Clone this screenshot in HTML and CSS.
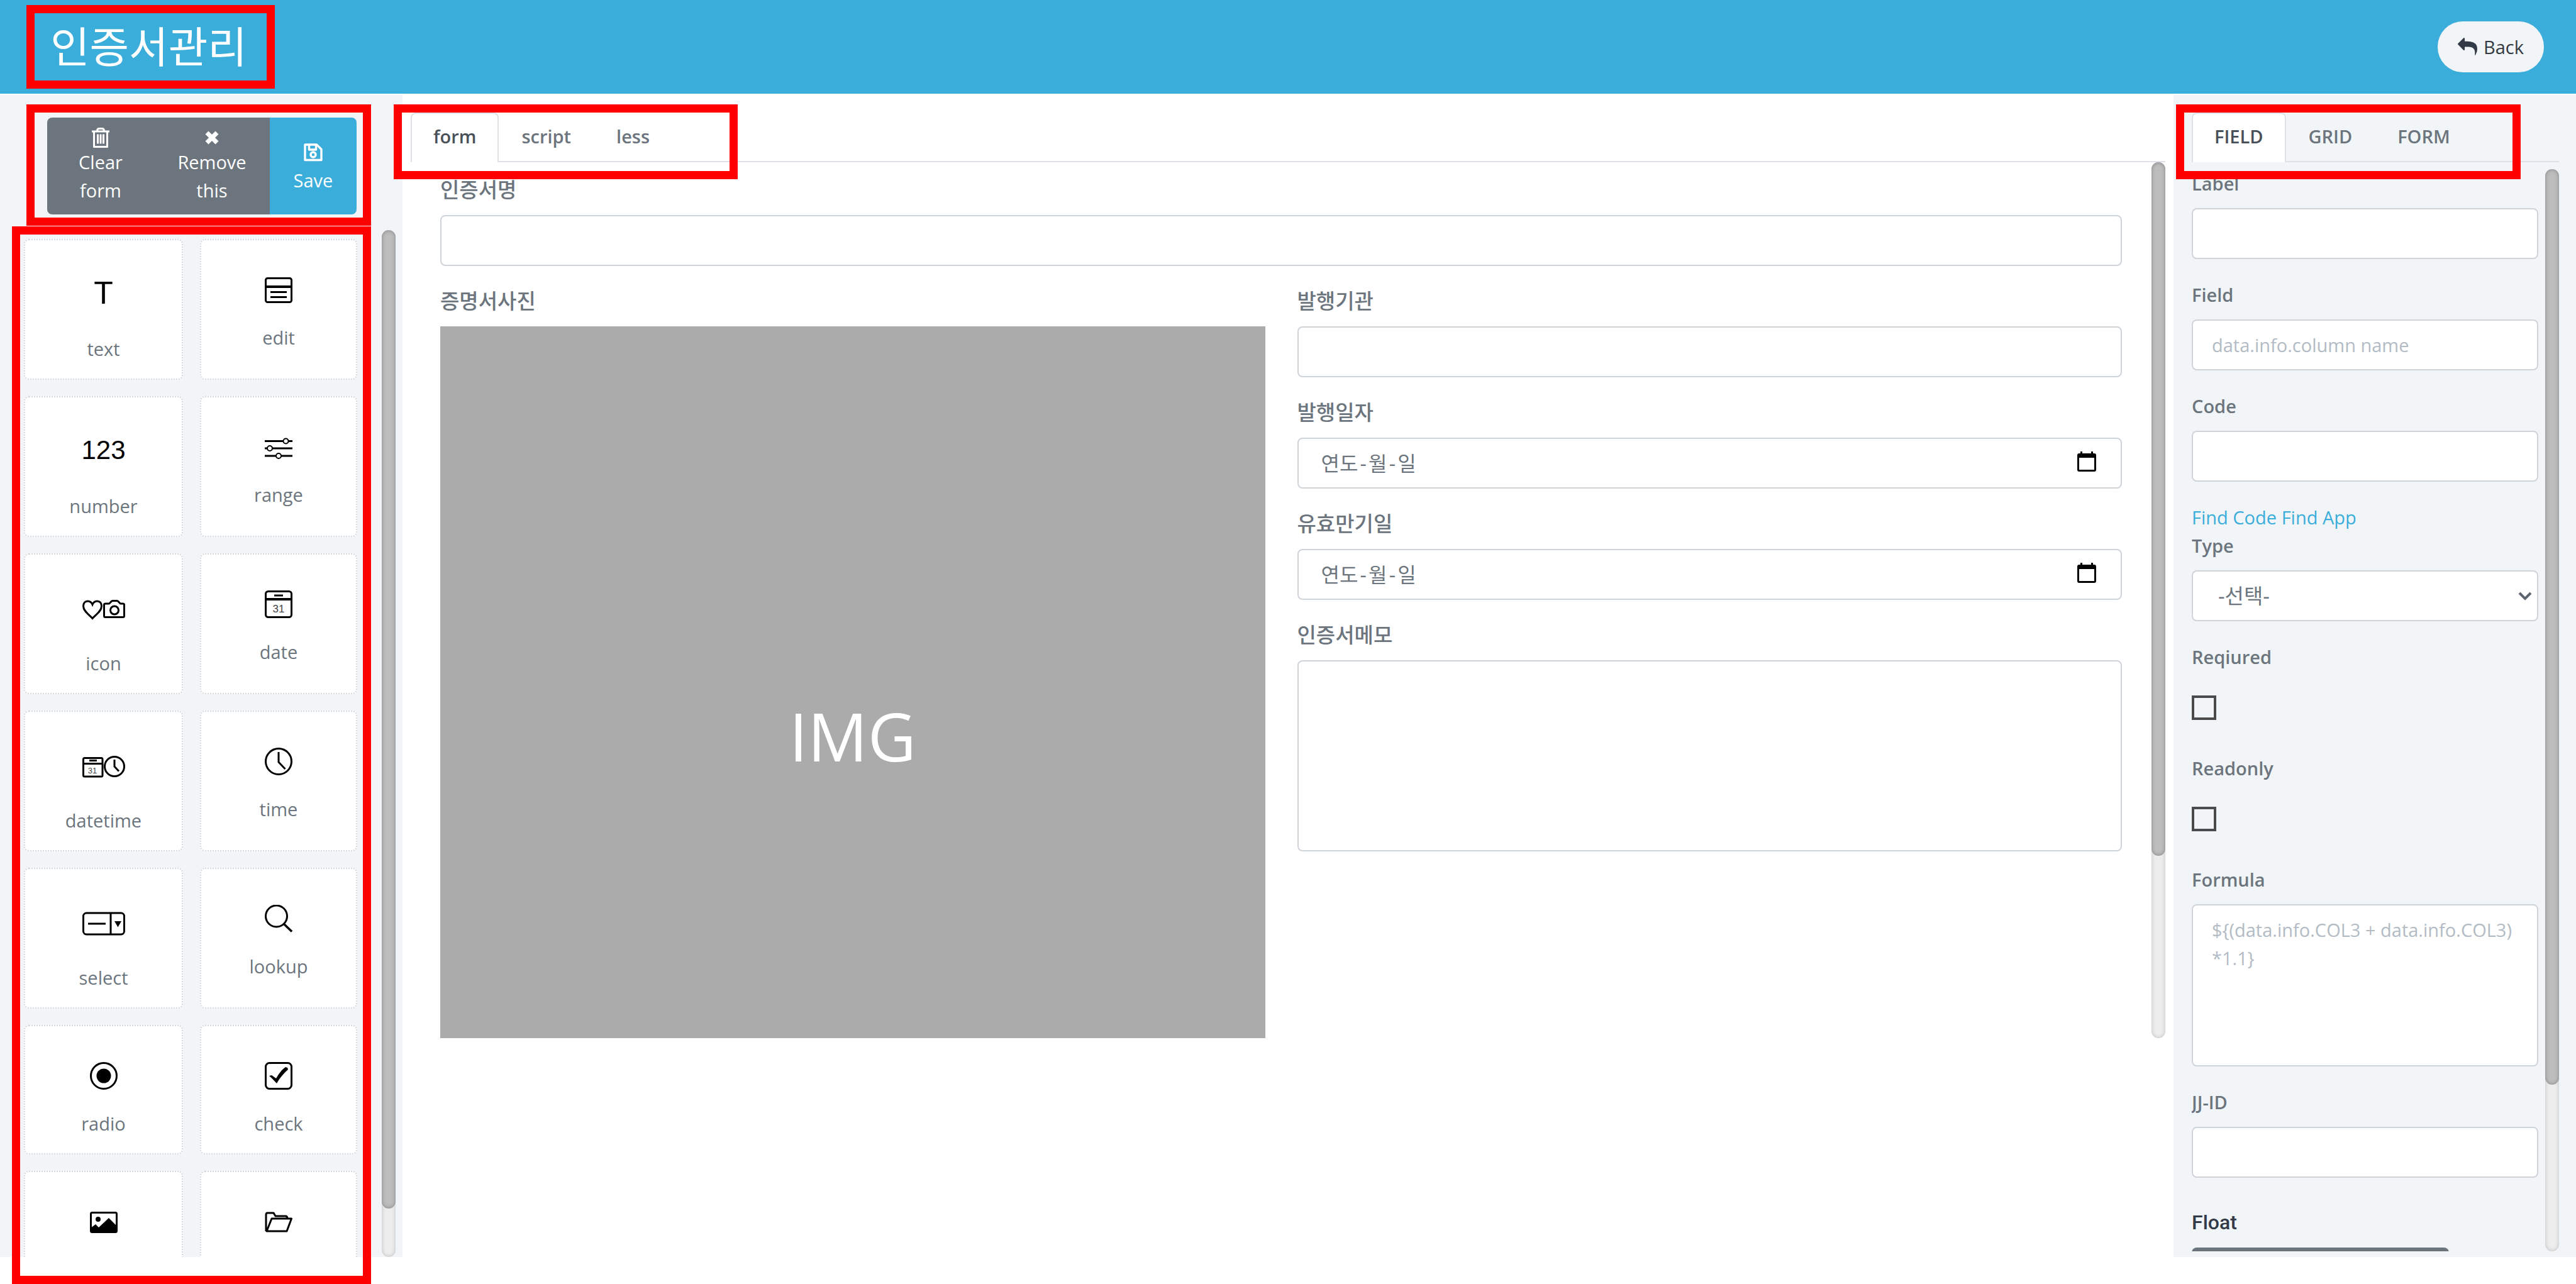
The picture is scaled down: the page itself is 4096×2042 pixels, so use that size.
FILE: index.html
```html
<!DOCTYPE html>
<html lang="ko">
<head>
<meta charset="utf-8">
<title>인증서관리</title>
<link rel="stylesheet" href="styles.css">
</head>
<body>
<div class="page">
  <header class="topbar">
    <h1 class="title">인증서관리</h1>
    <button class="back" type="button">
      <svg class="back-icon" viewBox="0 0 1792 1792" aria-hidden="true"><path d="M1792 1120q0 166-127 451-3 7-10.500 24t-13.500 30-13 22q-12 17-28 17-15 0-23.500-10t-8.500-25q0-9 2.500-26.500t2.500-23.500q5-68 5-123 0-101-17.500-181t-48.500-138.500-80-101-105.500-69.500-133-42.500-154-21.500-175.500-6h-224v256q0 26-19 45t-45 19-45-19l-512-512q-19-19-19-45t19-45l512-512q19-19 45-19t45 19 19 45v256h224q713 0 875 403 53 134 53 333z"/></svg>
      Back
    </button>
  </header>

  <div class="columns">
    <aside class="palette">
      <div class="tools">
        <button class="tool" type="button">
          <svg class="tool-icon" viewBox="0 0 34 32" aria-hidden="true"><path d="M3 6h28M11.500 5.500q0-4 3-4h5q3 0 3 4M6.500 7v23.500h21V7M12.500 10.500v15M17 10.500v15M21.500 10.500v15" fill="none" stroke="currentColor" stroke-width="3" stroke-linejoin="round"/></svg>
          <span>Clear<br>form</span>
        </button>
        <button class="tool" type="button">
          <svg class="tool-icon" viewBox="0 0 34 32" aria-hidden="true"><path d="M9 8l16 16M25 8L9 24" fill="none" stroke="currentColor" stroke-width="7"/></svg>
          <span>Remove<br>this</span>
        </button>
        <button class="tool tool-save" type="button">
          <svg class="tool-icon" viewBox="0 0 34 32" aria-hidden="true"><path d="M4 4h18.500l7.500 7.500V28.500H4zM10.500 4v8h11V5" fill="none" stroke="currentColor" stroke-width="3.400" stroke-linejoin="round"/><circle cx="17" cy="20" r="4" fill="none" stroke="currentColor" stroke-width="3.400"/></svg>
          <span>Save</span>
        </button>
      </div>

      <div class="palette-scroll">
        <div class="cards">
          <div class="card"><span class="glyph glyph-t">T</span><span>text</span></div>
          <div class="card">
            <svg class="icon" viewBox="0 0 44 44"><g class="line"><rect x="1.500" y="3.500" width="41" height="38" rx="3"/><path d="M1 17h42" stroke-width="4"/><path d="M9 25.500h26M9 33.500h26"/></g></svg>
            <span>edit</span></div>

          <div class="card"><span class="glyph">123</span><span>number</span></div>
          <div class="card">
            <svg class="icon" viewBox="0 0 44 44"><g class="line"><path d="M0 12.500h44M0 24h44M0 36h44"/><g fill="#fff" stroke-width="2"><circle cx="33.500" cy="12.500" r="4"/><circle cx="8" cy="24" r="4"/><circle cx="22" cy="36" r="4"/></g></g></svg>
            <span>range</span></div>

          <div class="card">
            <svg class="icon-wide" viewBox="0 0 68 62"><g class="line"><path d="M16 44.500C11 39 1.500 33 1.500 25c0-5 3-8 7-8 3.500 0 6 2 7.500 5.500C17.500 19 20 17 23.500 17c4 0 7 3 7 8 0 8-9.500 14-14.500 19.500z"/><path d="M36.500 21h5.500c2.500 0 3-4.500 6-4.500h7c3 0 3.500 4.500 6 4.500h3.500c1.500 0 2 .5 2 2v17.500c0 1.500-.5 2-2 2h-28c-1.500 0-2-.5-2-2V23c0-1.500.5-2 2-2z"/><circle cx="51" cy="31.500" r="6.500"/></g></svg>
            <span>icon</span></div>
          <div class="card">
            <svg class="icon" viewBox="0 0 44 44"><g class="line"><rect x="1.500" y="1.500" width="41" height="41" rx="4"/><path d="M1 14h42" stroke-width="4"/><path d="M15 8h14"/></g><text class="day" x="22" y="35">31</text></svg>
            <span>date</span></div>

          <div class="card">
            <svg class="icon-wide" viewBox="0 0 68 62"><g class="line"><rect x="1.500" y="16.500" width="30.500" height="29.500" rx="2"/><path d="M1 25.500h31M11 20.500h12"/><circle cx="51" cy="30" r="15.500"/><path d="M51 19v11l7 7.500"/></g><text class="day day-small" x="16" y="41">31</text></svg>
            <span>datetime</span></div>
          <div class="card">
            <svg class="icon" viewBox="0 0 44 44"><g class="line"><circle cx="22" cy="22" r="20.500"/><path d="M22 7v16l10.500 11"/></g></svg>
            <span>time</span></div>

          <div class="card">
            <svg class="icon-wide" viewBox="0 0 68 62"><g class="line"><rect x="1.500" y="13" width="65" height="34" rx="5"/><path d="M45 13v34M9 30h28"/></g><path d="M51 26h11l-5.500 9.500z"/></svg>
            <span>select</span></div>
          <div class="card">
            <svg class="icon" viewBox="0 0 44 44"><g class="line"><circle cx="18.500" cy="18" r="17"/><path d="M30 30l13 12.500" stroke-width="3.500"/></g></svg>
            <span>lookup</span></div>

          <div class="card">
            <svg class="icon" viewBox="0 0 44 44"><circle class="line" cx="22" cy="22" r="20.500"/><circle cx="22" cy="22" r="11.500"/></svg>
            <span>radio</span></div>
          <div class="card">
            <svg class="icon" viewBox="0 0 44 44"><rect class="line" x="1.500" y="1.500" width="41" height="41" rx="6"/><path d="M7 22l4-1 7 5c4-7 9-14 15-18l3 1 1 3c-7 6-13 13-18 22-4-4-7-8-12-12z"/></svg>
            <span>check</span></div>

          <div class="card card-bare">
            <svg class="icon" viewBox="0 0 44 44"><rect class="line" x="1.500" y="7.500" width="41" height="31" rx="2"/><circle cx="13" cy="18" r="4"/><path d="M1 32l8-6 5 5L30 16l13 13v10H1z"/></svg>
          </div>
          <div class="card card-bare">
            <svg class="icon" viewBox="0 0 44 44"><path class="line" d="M2 37V11c0-2 1-3 2-3h10l3 5h16c2 0 3 1 3 4M3 37l8-20h31.500L35 37z" stroke-linejoin="round"/></svg>
          </div>
        </div>
        <div class="rail"><div class="thumb" style="height: 95.300%"></div></div>
      </div>
    </aside>

    <main class="canvas">
      <nav class="tabs">
        <a class="tab active" href="#form">form</a>
        <a class="tab" href="#script">script</a>
        <a class="tab" href="#less">less</a>
      </nav>
      <div class="canvas-scroll">
        <form class="form">
          <div class="field wide">
            <label for="name">인증서명</label>
            <input id="name" type="text">
          </div>
          <div class="field photo">
            <label for="photo">증명서사진</label>
            <div class="img" id="photo">IMG</div>
          </div>
          <div class="stack">
            <div class="field">
              <label for="org">발행기관</label>
              <input id="org" type="text">
            </div>
            <div class="field">
              <label for="issued">발행일자</label>
              <div class="datebox">
                <input id="issued" type="text" placeholder="연도&#8202;-&#8202;월&#8202;-&#8202;일">
                <svg class="cal" viewBox="0 0 30 32" aria-hidden="true"><path d="M5 0h3v3h14V0h3v3h2q3 0 3 3v23q0 3-3 3H3q-3 0-3-3V6q0-3 3-3h2zM3 10v19h24V10z"/></svg>
              </div>
            </div>
            <div class="field">
              <label for="expires">유효만기일</label>
              <div class="datebox">
                <input id="expires" type="text" placeholder="연도&#8202;-&#8202;월&#8202;-&#8202;일">
                <svg class="cal" viewBox="0 0 30 32" aria-hidden="true"><path d="M5 0h3v3h14V0h3v3h2q3 0 3 3v23q0 3-3 3H3q-3 0-3-3V6q0-3 3-3h2zM3 10v19h24V10z"/></svg>
              </div>
            </div>
            <div class="field">
              <label for="memo">인증서메모</label>
              <textarea class="memo" id="memo"></textarea>
            </div>
          </div>
        </form>
        <div class="rail"><div class="thumb" style="height: 79.200%"></div></div>
      </div>
    </main>

    <aside class="props" lang="en">
      <nav class="tabs">
        <a class="tab active" href="#field">FIELD</a>
        <a class="tab" href="#grid">GRID</a>
        <a class="tab" href="#formtab">FORM</a>
      </nav>
      <div class="props-scroll">
        <form class="props-form">
          <div class="field"><label for="p-label">Label</label><input id="p-label" type="text"></div>
          <div class="field"><label for="p-field">Field</label><input id="p-field" type="text" placeholder="data.info.column name"></div>
          <div class="field"><label for="p-code">Code</label><input id="p-code" type="text"></div>
          <div class="links"><a href="#code">Find Code</a> <a href="#app">Find App</a></div>
          <div class="field">
            <label for="p-type">Type</label>
            <div class="selectbox">
              <select id="p-type" lang="ko"><option>-선택-</option></select>
              <svg class="chevron" viewBox="0 0 22 14" aria-hidden="true"><path d="M2 2l9 9 9-9" fill="none" stroke="#5c6670" stroke-width="4"/></svg>
            </div>
          </div>
          <div class="field"><label for="p-req">Reqiured</label><div class="tick"><input id="p-req" type="checkbox"></div></div>
          <div class="field"><label for="p-ro">Readonly</label><div class="tick"><input id="p-ro" type="checkbox"></div></div>
          <div class="field"><label for="p-formula">Formula</label><textarea class="formula" id="p-formula" placeholder="${(data.info.COL3 + data.info.COL3) *1.1}"></textarea></div>
          <div class="field"><label for="p-id">JJ-ID</label><input id="p-id" type="text"></div>
          <h2 class="float">Float</h2>
          <button class="float-btn" type="button" aria-label="Float"></button>
        </form>
        <div class="rail"><div class="thumb" style="height: 84.600%"></div></div>
      </div>
    </aside>
  </div>

  <div class="mark mark-title"></div>
  <div class="mark mark-tools"></div>
  <div class="mark mark-cards"></div>
  <div class="mark mark-tabs"></div>
  <div class="mark mark-props"></div>
</div>
</body>
</html>
```

FILE: styles.css
```css
* { box-sizing: border-box; }

body {
  margin: 0;
  background: #fff;
  color: #6c757d;
  font: 400 29px/45px "Open Sans", "Noto Sans CJK KR", sans-serif;
}

button, input, select, textarea { font: inherit; color: inherit; }

.page {
  position: relative;
  height: 100vh;
  overflow: hidden;
  display: flex;
  flex-direction: column;
  padding-bottom: 43px;
}

/* Header */
.topbar {
  flex: none;
  height: 149px;
  padding: 0 51px 0 80px;
  display: flex;
  align-items: center;
  justify-content: space-between;
  background: #3badda;
}

.title {
  margin: 0;
  padding-bottom: 8px;
  color: #fff;
  font: 400 68px/100px "Noto Sans CJK KR", sans-serif;
}

.back {
  display: flex;
  align-items: center;
  gap: 10px;
  height: 81px;
  padding: 0 32px;
  border: 0;
  border-radius: 40px;
  background: #f1f5f8;
  color: #343a40;
}

.back-icon { width: 31px; height: 31px; fill: #313a46; }

.columns { flex: 1; min-height: 0; display: flex; padding-top: 2px; }

/* Scroll rails */
.rail {
  flex: none;
  width: 22px;
  border-radius: 11px;
  background: #ededed;
  box-shadow: inset 0 0 6px rgba(0, 0, 0, .2);
}

.thumb {
  border-radius: 11px;
  background: #bdbdbd;
  box-shadow: inset 0 0 6px rgba(0, 0, 0, .3);
}

/* Left palette */
.palette {
  flex: none;
  width: 640px;
  display: flex;
  flex-direction: column;
  background: #f1f5f8;
}

.tools {
  display: flex;
  height: 154px;
  margin: 36px 73px 25px 75px;
  border-radius: 8px;
  overflow: hidden;
}

.tool {
  flex: 170 0 0;
  display: flex;
  flex-direction: column;
  align-items: center;
  justify-content: center;
  border: 0;
  padding: 0;
  background: #6c757d;
  color: #fff;
}

.tool:nth-child(2) { flex-grow: 184; }
.tool-save { flex-grow: 138; gap: 6px; padding-top: 6px; background: #3badda; }
.tool-icon { width: 34px; height: 32px; }

.palette-scroll {
  flex: 1;
  min-height: 0;
  display: flex;
  justify-content: space-between;
  padding-right: 11px;
  overflow: hidden;
}

.cards {
  width: 530px;
  margin-left: 38px;
  padding-top: 14px;
  display: grid;
  grid-template-columns: 253px 250px;
  gap: 26px 27px;
  align-content: start;
}

.card {
  display: flex;
  flex-direction: column;
  align-items: center;
  gap: 31px;
  padding: 57px 0 25px;
  border: 2px dotted #d6d9dc;
  border-radius: 8px;
  background: #fff;
}

.card-bare { padding-bottom: 100px; }

.icon { flex: none; width: 44px; height: 44px; }
.icon-wide { flex: none; width: 68px; height: 62px; }
.line { fill: none; stroke: #000; stroke-width: 3px; }
.line [stroke-width="4"] { stroke-width: 4px; }
.line [stroke-width="2"] { stroke-width: 2px; }

.glyph {
  height: 62px;
  color: #000;
  font: 400 42px/54px "Liberation Sans", sans-serif;
}

.glyph-t { font-size: 50px; }
.day { font: 400 17px "Liberation Sans", sans-serif; text-anchor: middle; fill: #444; }
.day-small { font-size: 13px; }

/* Tabs */
.tabs {
  flex: none;
  display: flex;
  height: 79px;
  border-bottom: 2px solid #dee2e6;
}

.tab {
  height: 79px;
  padding: 13px 34px;
  border: 2px solid transparent;
  border-bottom: 0;
  border-radius: 8px 8px 0 0;
  color: #6c757d;
  font-weight: 600;
  text-decoration: none;
}

.tab.active { background: #fff; border-color: #dee2e6; color: #495057; }

/* Centre canvas */
.canvas { flex: 1; min-width: 0; padding: 28px 13px 0; }

.canvas-scroll {
  display: flex;
  height: 1393px;
  overflow: hidden;
}

.form {
  flex: 1;
  display: grid;
  grid-template-columns: 1fr 1fr;
  column-gap: 51px;
  align-content: start;
  padding: 22px 47px 0 47px;
}

.wide { grid-column: 1 / -1; }

.field { display: flex; flex-direction: column; margin-bottom: 34px; }

.field label {
  line-height: 45px;
  margin-bottom: 17px;
  font-weight: 600;
  align-self: flex-start;
}

.form label { font-size: 33px; font-weight: 500; line-height: 43px; margin-bottom: 19px; }

.field input[type="text"], select, textarea {
  display: block;
  width: 100%;
  height: 81px;
  margin: 0;
  padding: 16px 30px;
  border: 2px solid #ced4da;
  border-radius: 8px;
  background: #fff;
  outline: 0;
}

textarea { resize: none; }
.field .memo { height: 304px; }
.field .formula { height: 258px; }

::placeholder { color: #b3bbc4; opacity: 1; }
.datebox ::placeholder { color: #6c757d; }
.field .datebox input { font-size: 32px; padding-left: 36px; }

.datebox, .selectbox { position: relative; }
.cal { position: absolute; right: 41px; top: 22px; width: 30px; height: 32px; fill: #000; }
.chevron { position: absolute; right: 10px; top: 34px; width: 22px; height: 14px; }

.img {
  height: 1200px;
  padding-top: 566px;
  background: #ababab;
  color: #fff;
  font-size: 106px;
  line-height: 170px;
  text-align: center;
}

/* Right properties */
.props {
  flex: none;
  width: 640px;
  display: flex;
  flex-direction: column;
  padding: 28px 27px 9px 29px;
  background: #f1f5f8;
}

.props-scroll {
  flex: 1;
  min-height: 0;
  margin-top: 11px;
  display: flex;
  gap: 11px;
  overflow: hidden;
}

.props-form { flex: 1; min-width: 0; }

.links a { color: #3badda; text-decoration: none; }

.selectbox select { appearance: none; padding: 0 40px; font-size: 33px; }

.tick { height: 81px; padding-top: 2px; display: flex; align-items: center; }

.tick input {
  appearance: none;
  width: 39px;
  height: 39px;
  margin: 0;
  border: 4px solid #4b4b4b;
}

.float {
  margin: 0;
  padding-top: 15px;
  color: #313a46;
  font: 500 32px/45px Roboto, sans-serif;
}

.float-btn {
  width: 409px;
  height: 80px;
  margin-top: 17px;
  border: 0;
  border-radius: 8px;
  background: #6c757d;
}

/* Highlight frames laid over the page */
.mark { position: absolute; border: 13px solid #f00; pointer-events: none; }
.mark-title { left: 42px; top: 8px; width: 395px; height: 133px; }
.mark-tools { left: 42px; top: 166px; width: 548px; height: 193px; }
.mark-cards { left: 19px; top: 360px; width: 571px; bottom: 0; }
.mark-tabs { left: 626px; top: 166px; width: 547px; height: 119px; }
.mark-props { right: 88px; top: 166px; width: 548px; height: 119px; }
```
